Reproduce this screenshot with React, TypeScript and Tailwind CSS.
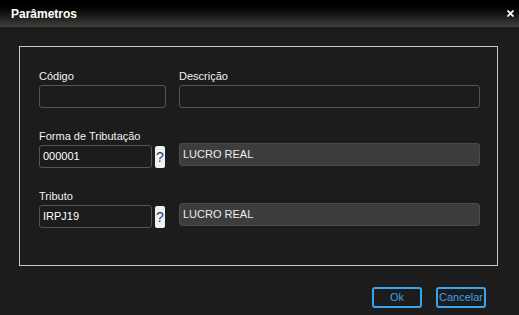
export default function App() {
  return (
    <div className="w-[519px] h-[315px] bg-[#1c1c1c] font-['Liberation_Sans',Arial,sans-serif] text-[11px] text-[#f2f2f2] flex flex-col overflow-hidden">
      <div className="h-[27px] shrink-0 flex items-center justify-between pl-[11px] pr-[5px] bg-gradient-to-b from-[#000000] to-[#43403d]">
        <span className="text-[12px] font-bold text-white">Parâmetros</span>
        <svg width="7" height="7" viewBox="0 0 7 7" className="mt-[-1px]">
          <path d="M0.5 0.5 L6.5 6.5 M6.5 0.5 L0.5 6.5" stroke="#ffffff" strokeWidth="1.8" />
        </svg>
      </div>

      <div className="mt-[19px] ml-[19px] w-[479px] h-[220px] border border-[#c8c8c8] pl-[19px] pt-[23px]">
        {/* linha 1 */}
        <div className="flex gap-[13px]">
          <div className="w-[127px]">
            <div className="h-[13px] leading-[13px]">Código</div>
            <div className="mt-[2px] h-[23px] rounded-[3px] border border-[#555] bg-[#1c1c1c]" />
          </div>
          <div className="w-[301px]">
            <div className="h-[13px] leading-[13px]">Descrição</div>
            <div className="mt-[2px] h-[23px] rounded-[3px] border border-[#555] bg-[#1c1c1c]" />
          </div>
        </div>

        {/* linha 2 */}
        <div className="flex mt-[22px]">
          <div className="w-[140px]">
            <div className="h-[13px] leading-[13px]">Forma de Tributação</div>
            <div className="mt-[2px] flex items-start gap-[3px]">
              <div className="w-[113px] h-[23px] rounded-[3px] border border-[#555] flex items-center pl-[3px] text-white">000001</div>
              <div className="mt-[1px] w-[10px] h-[22px] rounded-[2px] bg-[#f0f0f0] text-[#1b3b6f] text-[14px] leading-[22px] text-center">?</div>
            </div>
          </div>
          <div className="w-[301px] mt-[13px] h-[23px] rounded-[3px] border border-[#4b4b4b] bg-[#3d3d3d] flex items-center pl-[3px] text-[#ececec]">
            LUCRO REAL
          </div>
        </div>

        {/* linha 3 */}
        <div className="flex mt-[22px]">
          <div className="w-[140px]">
            <div className="h-[13px] leading-[13px]">Tributo</div>
            <div className="mt-[2px] flex items-start gap-[3px]">
              <div className="w-[113px] h-[23px] rounded-[3px] border border-[#555] flex items-center pl-[3px] text-white">IRPJ19</div>
              <div className="mt-[1px] w-[10px] h-[22px] rounded-[2px] bg-[#f0f0f0] text-[#1b3b6f] text-[14px] leading-[22px] text-center">?</div>
            </div>
          </div>
          <div className="w-[301px] mt-[13px] h-[23px] rounded-[3px] border border-[#4b4b4b] bg-[#3d3d3d] flex items-center pl-[3px] text-[#ececec]">
            LUCRO REAL
          </div>
        </div>
      </div>

      <div className="flex justify-end gap-[14px] pr-[33px] mt-[21px]">
        <button className="w-[50px] h-[21px] rounded-[3px] border-2 border-[#3ba3ee] text-[#3c9fe8] text-[11px] leading-none">Ok</button>
        <button className="w-[50px] h-[21px] rounded-[3px] border-2 border-[#3ba3ee] text-[#3c9fe8] text-[11px] leading-none">Cancelar</button>
      </div>
    </div>
  )
}
